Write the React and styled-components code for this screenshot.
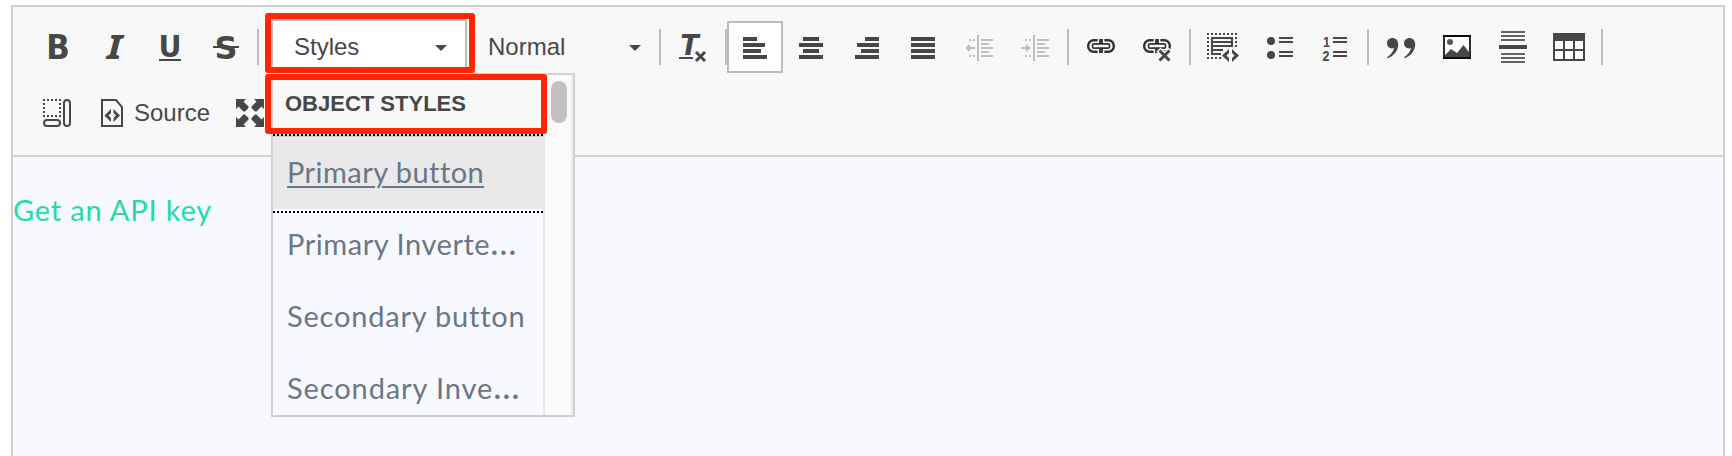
import React from 'react';
import styled, { createGlobalStyle } from 'styled-components';

const INK = '#474747';

const GlobalStyle = createGlobalStyle`
  * { box-sizing: border-box; }
  body { margin: 0; background: #fff; overflow: hidden; font-family: "Liberation Sans", Arial, sans-serif; }
`;

const Page = styled.div`
  position: relative;
  height: 456px;
  padding: 5px 7px 0 11px;
  overflow: hidden;
`;
const Editor = styled.div`
  height: 480px;
  border: 2px solid #d1d1d1;
  background: #f8f9fe;
`;
const Toolbar = styled.div`
  display: flex;
  flex-direction: column;
  gap: 14px;
  padding: 14px 16px 16px;
  background: #f8f8f8;
  border-bottom: 2px solid #d1d1d1;
`;
const Row = styled.div`
  display: flex;
  align-items: center;
  height: 52px;
`;
const ToolButton = styled.button`
  display: flex;
  align-items: center;
  flex: none;
  height: 52px;
  padding: 0 ${p => (p.$active ? 10 : 12)}px;
  border: ${p => (p.$active ? '2px solid #bcbcbc' : '0')};
  background: ${p => (p.$active ? '#fff' : 'transparent')};
  color: ${INK};
  font: 24px "Liberation Sans", Arial, sans-serif;
  opacity: ${p => (p.$disabled ? 0.32 : 1)};
  svg { display: block; flex: none; }
`;
const ButtonLabel = styled.span`
  margin-left: 5px;
`;
const Separator = styled.span`
  flex: none;
  width: 2px;
  height: 36px;
  margin: 0 ${p => (p.$tight ? 0 : 4)}px 0 4px;
  background: #bcbcbc;
`;
const Combo = styled.button`
  display: flex;
  align-items: center;
  justify-content: space-between;
  flex: none;
  width: 196px;
  height: 56px;
  margin: 0 ${p => (p.$open ? '-2px 0 8px' : '-6px 0 0')};
  padding: 0 18px 0 21px;
  border: 2px solid ${p => (p.$open ? '#bcbcbc' : 'transparent')};
  background: ${p => (p.$open ? '#fff' : 'transparent')};
  color: ${INK};
  font: 24px "Liberation Sans", Arial, sans-serif;
`;
const Caret = styled.span`
  border: 6px solid transparent;
  border-top-color: ${INK};
  border-bottom: 0;
  margin-top: 2px;
`;
const Content = styled.div`
  padding-top: 33px;
`;
const ContentLink = styled.a`
  display: block;
  color: #26d9a9;
  font: 29px/40px Lato, sans-serif;
  letter-spacing: 0.82px;
`;
const Panel = styled.div`
  position: absolute;
  left: 271px;
  top: 73px;
  display: flex;
  width: 304px;
  height: 344px;
  border: 2px solid #d1d1d1;
  background: #f8f9fe;
  overflow: hidden;
`;
const StyleList = styled.div`
  width: 270px;
`;
const GroupTitle = styled.div`
  height: 62px;
  padding-left: 12px;
  border-bottom: 2px solid #d1d1d1;
  background: #f8f8f8;
  color: ${INK};
  font: bold 22px/57px "Liberation Sans", Arial, sans-serif;
`;
const StyleItem = styled.div`
  position: relative;
  height: 72px;
  padding: 0 0 0 14px;
  color: #6b7686;
  font: 29px/70px Lato, sans-serif;
  letter-spacing: ${p => p.$spacing}px;
  white-space: nowrap;
  text-decoration: ${p => (p.$selected ? 'underline' : 'none')};
  text-decoration-thickness: 2px;
  text-underline-offset: 3px;
  background: ${p => (p.$selected ? '#e9e9e9' : 'none')};
`;
const Ellipsis = styled.span`
  font-size: 35px;
  line-height: 1;
`;
const FocusLine = styled.span`
  position: absolute;
  left: 0;
  right: 0;
  top: ${p => p.$top}px;
  height: 2px;
  background: repeating-linear-gradient(90deg, #000 0 2px, transparent 2px 4px);
`;
const Track = styled.div`
  width: 30px;
  padding: 6px;
  border-left: 2px solid #e8e8e8;
  border-right: 2px solid #ededed;
  background: #fafafa;
`;
const Thumb = styled.div`
  width: 16px;
  height: 42px;
  border-radius: 8px;
  background: #c1c1c1;
`;
const Highlight = styled.div`
  position: absolute;
  left: 265px;
  top: ${p => p.$top}px;
  width: ${p => p.$width}px;
  height: 60px;
  border: 6px solid #ff2600;
  border-radius: 3px;
`;

const Icon = ({ children }) => (
  <svg width="32" height="32" viewBox="0 0 32 32" fill={INK} stroke="none" overflow="visible">{children}</svg>
);
const Bars = ({ rows, h = 4 }) => rows.map(([x, y, w], i) => <rect key={i} x={x} y={y} width={w} height={h} />);
const Letter = ({ x, y = 28, size = 33, width, italic, family = 'DejaVu Sans', children }) => (
  <text
    x={x} y={y} textAnchor="middle" fontFamily={`"${family}", sans-serif`} fontWeight="700" fontSize={size}
    fontStyle={italic ? 'italic' : 'normal'} textLength={width} lengthAdjust="spacingAndGlyphs"
  >{children}</text>
);
const Cross = ({ x, y, s = 9 }) => <path d={`M${x} ${y}l${s} ${s}M${x + s} ${y}l${-s} ${s}`} stroke={INK} strokeWidth="3" fill="none" />;

const Bold = () => <Icon><Letter x={17} width={23.5}>B</Letter></Icon>;
const Italic = () => <Icon><Letter x={17.5} size={34} width={15.5} family="Noto Sans" italic>I</Letter></Icon>;
const Underline = () => <Icon><Letter x={17} y={26} size={30} width={23}>U</Letter><rect x="6" y="28" width="22" height="2" /></Icon>;
const Strike = () => <Icon><Letter x={17} size={32} width={23}>S</Letter><rect x="4" y="15" width="26" height="2" /></Icon>;
const RemoveFormat = () => (
  <Icon><Letter x={12.5} y={24} size={27.5} width={18.5} italic>T</Letter><rect x="2" y="26" width="14" height="2" /><Cross x={19} y={21} /></Icon>
);
const AlignLeft = () => <Icon><Bars rows={[[4, 6, 14], [4, 12, 22], [4, 18, 18], [4, 24, 24]]} /></Icon>;
const AlignCenter = () => <Icon><Bars rows={[[8, 6, 16], [4, 12, 24], [8, 18, 16], [4, 24, 24]]} /></Icon>;
const AlignRight = () => <Icon><Bars rows={[[14, 6, 14], [6, 12, 22], [10, 18, 18], [4, 24, 24]]} /></Icon>;
const Justify = () => <Icon><Bars rows={[[4, 6, 24], [4, 12, 24], [4, 18, 24], [4, 24, 24]]} /></Icon>;
const Indent = ({ out }) => (
  <Icon>
    <Bars h={2} rows={[[6, 8, 2], [10, 8, 2], [6, 24, 2], [10, 24, 2], [18, 8, 12], [18, 12, 8], [18, 16, 12], [18, 20, 8], [18, 24, 12]]} />
    <rect x="14" y="4" width="2" height="26" />
    <path d={out ? 'M2 17l5-4v3h5v2H7v3z' : 'M12 17l-5-4v3H2v2h5v3z'} />
  </Icon>
);
const LinkShape = () => (
  <>
    <rect x="3.200" y="9.200" width="25.600" height="11.600" rx="5.500" fill="#fff" stroke="#2c3333" strokeWidth="2.400" />
    <path d="M13.300 7v4M18.700 7v4M13.300 19v4M18.700 19v4" stroke="#f8f8f8" strokeWidth="1.400" />
    <rect x="14" y="8" width="4" height="4" fill="#3b3f3f" />
    <rect x="14" y="18" width="4" height="4" fill="#3b3f3f" />
    <rect x="7.500" y="12.800" width="17" height="4.400" rx="1.500" fill="#f8f8f8" stroke="#2c3333" strokeWidth="1.700" />
  </>
);
const Link = () => <Icon><LinkShape /></Icon>;
const Unlink = () => (
  <Icon>
    <LinkShape />
    <path d="M17.500 18.500l12 12M29.500 18.500l-12 12" stroke="#f8f8f8" strokeWidth="6" />
    <Cross x={18.500} y={19.500} s={10} />
  </Icon>
);
const dots = (list) => list.map(([x, y]) => [x, y, 2]);
const Templates = () => (
  <Icon>
    <Bars h={2} rows={dots([0, 4, 8, 12, 16, 20, 24, 28].map(x => [x, 2]))} />
    <Bars h={2} rows={dots([6, 10, 14, 18, 22, 26].map(y => [0, y]))} />
    <Bars h={2} rows={dots([6, 10, 14].map(y => [28, y]))} />
    <Bars h={2} rows={dots([4, 8, 12].map(x => [x, 26]))} />
    <Bars h={2} rows={[[4, 6, 22], [4, 10, 22], [4, 14, 22], [4, 18, 12], [4, 22, 10]]} />
    <rect x="4" y="6" width="2" height="18" />
    <rect x="24" y="6" width="2" height="10" />
    <path d="M22 18v4l-2.500 2.500 2.500 2.500v4l-7-6.500zM25 18v4l2.500 2.500-2.500 2.500v4l7-6.500z" />
  </Icon>
);
const LIST_LINES = [[16, 6, 14], [16, 10, 14], [16, 20, 14], [16, 24, 14]];
const Bullets = () => <Icon><circle cx="8" cy="10" r="4" /><circle cx="8" cy="24" r="4" /><Bars h={2} rows={LIST_LINES} /></Icon>;
const Numbers = () => (
  <Icon>
    <g fontFamily='"Liberation Sans", sans-serif' fontWeight="700" fontSize="14">
      <text x="4" y="16" textLength="7" lengthAdjust="spacingAndGlyphs">1</text>
      <text x="3.500" y="30" textLength="7" lengthAdjust="spacingAndGlyphs">2</text>
    </g>
    <Bars h={2} rows={LIST_LINES.map(([x, y, w]) => [x - 2, y, w])} />
  </Icon>
);
const Quote = () => (
  <Icon>
    {[0, 17].map(x => <path key={x} transform={`translate(${x} 0)`} d="M7.400 7C4.400 7 2 9.300 2 12.300s2.200 5.200 5 5.200c.7 0 1.400-.1 2-.4C8.300 20.500 6 24 2 26.400l.6.8C9 25 13.200 19.500 13.200 13.500 13.200 9.500 10.800 7 7.400 7z" />)}
  </Icon>
);
const Picture = () => (
  <Icon>
    <rect x="3" y="5" width="26" height="22" fill="#fff" stroke="#253033" strokeWidth="2" />
    <path d="M2 4h28v2H2zM2 26h28v2H2z" fill="#0b0d0d" />
    <circle cx="9" cy="11" r="3" fill="#555" />
    <path d="M4 26v-2l6-6 6 4 6.500-8L28 21v5z" />
  </Icon>
);
const Rule = () => (
  <Icon>
    <g fill="#646464"><Bars h={2} rows={[0, 4, 8, 22, 26, 30].map(y => [4, y, 24])} /></g>
    <rect x="2" y="14" width="28" height="4" />
  </Icon>
);
const Table = () => (
  <Icon>
    <rect x="0" y="2" width="32" height="28" />
    <g fill="#fff">
      {[10, 20].map(y => [2, 12, 22].map(x => <rect key={`${x}-${y}`} x={x} y={y} width="8" height="8" />))}
    </g>
  </Icon>
);
const Blocks = () => (
  <Icon>
    <Bars h={2} rows={dots([2, 6, 10, 14, 18].flatMap(x => [[x, 2], [x, 18]]))} />
    <Bars h={2} rows={dots([6, 10, 14].flatMap(y => [[2, y], [18, y]]))} />
    <g fill="#f8f8f8" stroke={INK} strokeWidth="2">
      <rect x="23" y="3" width="6" height="26" rx="3" />
      <rect x="3" y="23" width="16" height="6" rx="3" />
    </g>
  </Icon>
);
const Source = () => (
  <Icon>
    <path d="M5 3h14l6 7v19H5z" fill="#f8f8f8" stroke={INK} strokeWidth="2" />
    <path d="M14 12v4l-2.500 2.500L14 21v4l-6.500-6.500zM16.500 12v4l2.500 2.500-2.500 2.500v4l6.500-6.500z" />
  </Icon>
);
const Maximize = () => (
  <Icon>
    {[0, 90, 180, 270].map(a => <path key={a} transform={`rotate(${a} 16 16)`} d="M2 2h10l-2.500 2.500 5 5V11L11 14.500H9.500l-5-5L2 12z" />)}
  </Icon>
);

const Tool = ({ icon, label, ...state }) => (
  <ToolButton type="button" {...state}>{icon}{label && <ButtonLabel>{label}</ButtonLabel>}</ToolButton>
);

export default function App() {
  return (
    <Page>
      <GlobalStyle />
      <Editor>
        <Toolbar>
          <Row>
            <Tool icon={<Bold />} />
            <Tool icon={<Italic />} />
            <Tool icon={<Underline />} />
            <Tool icon={<Strike />} />
            <Separator />
            <Combo type="button" $open>Styles<Caret /></Combo>
            <Combo type="button">Normal<Caret /></Combo>
            <Separator />
            <Tool icon={<RemoveFormat />} />
            <Separator $tight />
            <Tool icon={<AlignLeft />} $active />
            <Tool icon={<AlignCenter />} />
            <Tool icon={<AlignRight />} />
            <Tool icon={<Justify />} />
            <Tool icon={<Indent out />} $disabled />
            <Tool icon={<Indent />} $disabled />
            <Separator />
            <Tool icon={<Link />} />
            <Tool icon={<Unlink />} />
            <Separator />
            <Tool icon={<Templates />} />
            <Tool icon={<Bullets />} />
            <Tool icon={<Numbers />} />
            <Separator />
            <Tool icon={<Quote />} />
            <Tool icon={<Picture />} />
            <Tool icon={<Rule />} />
            <Tool icon={<Table />} />
            <Separator />
          </Row>
          <Row>
            <Tool icon={<Blocks />} />
            <Tool icon={<Source />} label="Source" />
            <Tool icon={<Maximize />} />
          </Row>
        </Toolbar>
        <Content><ContentLink>Get an API key</ContentLink></Content>
      </Editor>
      <Panel>
        <StyleList>
          <GroupTitle>OBJECT STYLES</GroupTitle>
          <StyleItem $selected $spacing={0.45}>Primary button<FocusLine $top={-3} /><FocusLine $top={74} /></StyleItem>
          <StyleItem $spacing={0.55}>Primary Inverte<Ellipsis>…</Ellipsis></StyleItem>
          <StyleItem $spacing={0.8}>Secondary button</StyleItem>
          <StyleItem $spacing={0.9}>Secondary Inve<Ellipsis>…</Ellipsis></StyleItem>
        </StyleList>
        <Track><Thumb /></Track>
      </Panel>
      <Highlight $top={13} $width={210} />
      <Highlight $top={74} $width={282} />
    </Page>
  );
}
